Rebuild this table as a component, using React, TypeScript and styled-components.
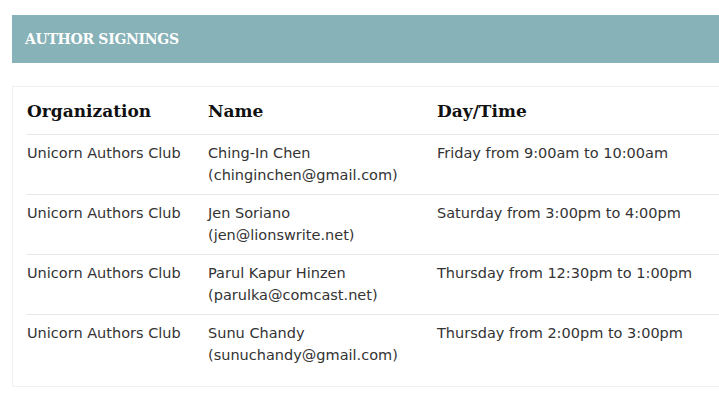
import React from 'react';
import styled, { createGlobalStyle } from 'styled-components';

interface Signing {
  organization: string;
  name: string;
  email: string;
  when: string;
}

const signings: Signing[] = [
  { organization: 'Unicorn Authors Club', name: 'Ching-In Chen', email: 'chinginchen@gmail.com', when: 'Friday from 9:00am to 10:00am' },
  { organization: 'Unicorn Authors Club', name: 'Jen Soriano', email: 'jen@lionswrite.net', when: 'Saturday from 3:00pm to 4:00pm' },
  { organization: 'Unicorn Authors Club', name: 'Parul Kapur Hinzen', email: 'parulka@comcast.net', when: 'Thursday from 12:30pm to 1:00pm' },
  { organization: 'Unicorn Authors Club', name: 'Sunu Chandy', email: 'sunuchandy@gmail.com', when: 'Thursday from 2:00pm to 3:00pm' },
];

const GlobalStyle = createGlobalStyle`
  html, body {
    margin: 0;
    padding: 0;
    background: #ffffff;
    overflow: hidden;
  }
`;

const Page = styled.div`
  width: 760px;
  padding: 15px 0 0 12px;
`;

const SectionBar = styled.div`
  height: 48px;
  background-color: #87b2b8;
  display: flex;
  align-items: center;
  padding-left: 13px;
`;

const SectionTitle = styled.h2`
  margin: 0;
  color: #ffffff;
  font-family: 'DejaVu Serif', 'Liberation Serif', serif;
  font-weight: 700;
  font-size: 14px;
  letter-spacing: -0.3px;
  text-transform: uppercase;
`;

const Card = styled.div`
  margin-top: 23px;
  border: 1px solid #f0f0f0;
  border-right: none;
  padding: 0 0 12px 14px;
`;

const Table = styled.table`
  width: 100%;
  border-collapse: collapse;
`;

const HeadCell = styled.th`
  height: 47px;
  padding: 0;
  text-align: left;
  vertical-align: middle;
  color: #111111;
  font-family: 'DejaVu Serif', 'Liberation Serif', serif;
  font-weight: 700;
  font-size: 17px;
  line-height: 20px;
  border-bottom: 1px solid #e6e6e6;
`;

const Row = styled.tr`
  border-bottom: 1px solid #e6e6e6;

  &:last-child {
    border-bottom: none;
  }
`;

const Cell = styled.td<{ $width?: number }>`
  width: ${({ $width }) => ($width ? `${$width}px` : 'auto')};
  height: 59px;
  padding: 7px 0 8px 0;
  box-sizing: border-box;
  vertical-align: top;
  color: #333333;
  font-family: 'DejaVu Sans', 'Liberation Sans', sans-serif;
  font-size: 14.5px;
  line-height: 22px;
`;

const App: React.FC = () => {
  return (
    <>
      <GlobalStyle />
      <Page>
        <SectionBar>
          <SectionTitle>Author Signings</SectionTitle>
        </SectionBar>
        <Card>
          <Table>
            <thead>
              <tr>
                <HeadCell>Organization</HeadCell>
                <HeadCell>Name</HeadCell>
                <HeadCell>Day/Time</HeadCell>
              </tr>
            </thead>
            <tbody>
              {signings.map((s) => (
                <Row key={s.email}>
                  <Cell $width={181}>{s.organization}</Cell>
                  <Cell $width={229}>
                    {s.name}
                    <br />({s.email})
                  </Cell>
                  <Cell>{s.when}</Cell>
                </Row>
              ))}
            </tbody>
          </Table>
        </Card>
      </Page>
    </>
  );
};

export default App;
